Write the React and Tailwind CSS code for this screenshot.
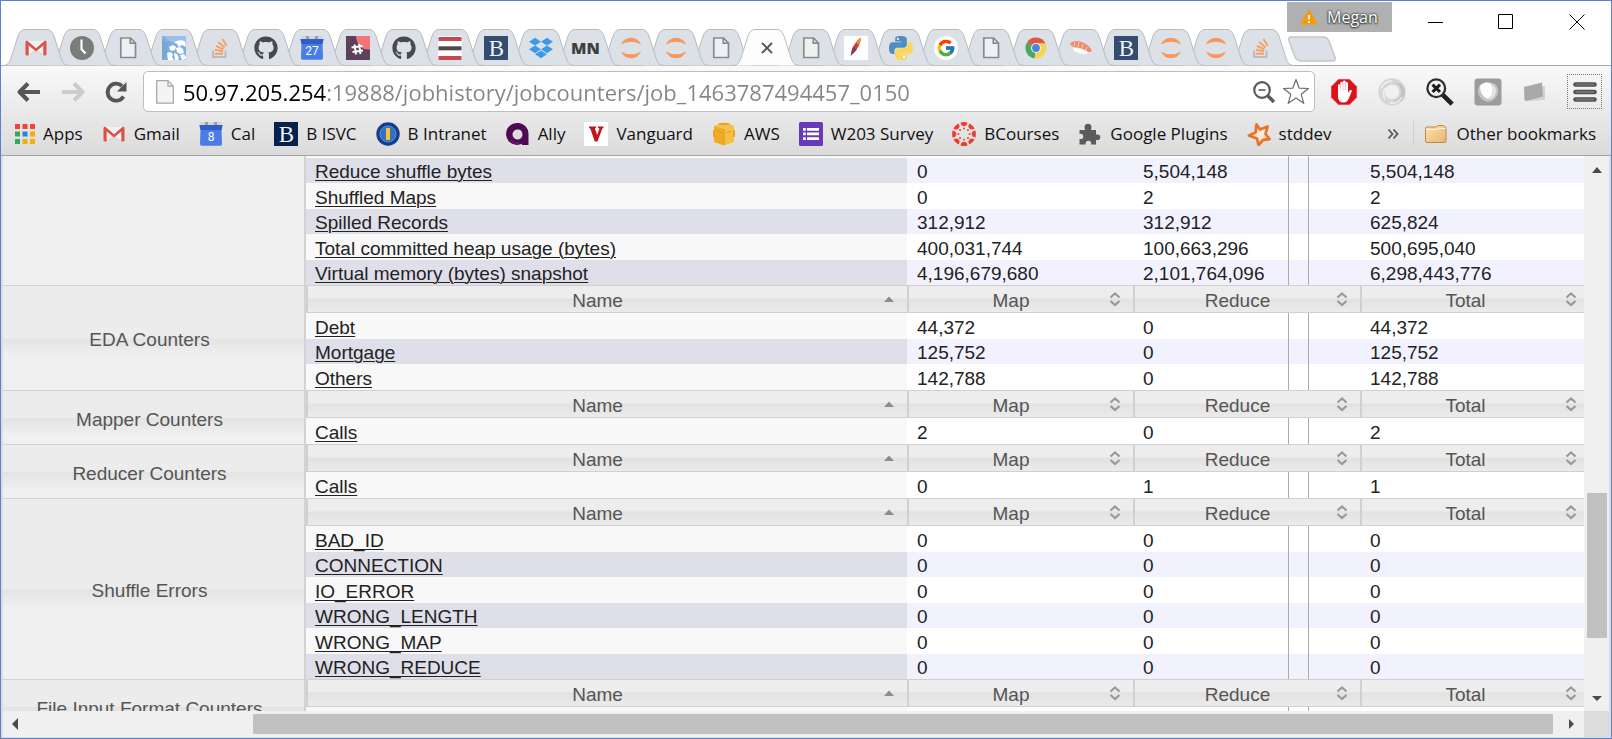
import React from "react";
import { FaGithub, FaDropbox } from "react-icons/fa";
import { FcGoogle } from "react-icons/fc";

/* ---------- favicons ---------- */

const Gmail = () => (
  <svg viewBox="0 0 24 24" className="size-6">
    <path d="M2 5h20v14.500H2z" fill="#f1f1f1" />
    <path d="M4 19.500l8-7 8 7z" fill="#dcdcdc" />
    <path d="M1.500 6.200Q1.500 4.500 3.300 4.500L12 12l8.700-7.500q1.800 0 1.800 1.700V18q0 1.500-1.500 1.500h-1.700V9.500L12 15.500 4.700 9.500v10H3q-1.500 0-1.500-1.500z" fill="#dd5347" />
    <path d="M3.300 4.500h2.200L12 9.800l6.500-5.300h2.200L12 12z" fill="#f7f7f7" />
  </svg>
);

const Clock = () => (
  <svg viewBox="0 0 24 24" className="size-6">
    <circle cx="12" cy="12" r="12" fill="#7b7b7b" />
    <path d="M11.500 3.500v9.500l4 4.500" fill="none" stroke="#fff" strokeWidth="2.200" />
  </svg>
);

const Doc = () => (
  <svg viewBox="0 0 24 24" className="size-6">
    <path d="M4.800 2h9.700l5 5v14.500H4.800z" fill="#eef0f2" stroke="#8a8a8a" strokeWidth="1.700" />
    <path d="M14.300 2v5.200h5.200" fill="none" stroke="#8a8a8a" strokeWidth="1.700" />
  </svg>
);

const Bird = () => (
  <svg viewBox="0 0 24 24" className="size-6">
    <path d="M0 0h24v24H0z" fill="#84aede" />
    <path d="M0 4q7 3 10 1-6 4-4 12-2 5-6 7z" fill="#79a4d6" />
    <path d="M2 0h22v5q-6-1-11 1Q6 6 2 0z" fill="#9bbfe7" />
    <path d="M12 6q6-3 11-1l1 6-4-2-3 2-2-3zM7 11l4-2 3 2-1 3-4 1zM5 17l3-1 3 2-1 3 2 3H6zM14 12l4-1 3 2 1 4-4 1-3-2zM12 17l3 1 2 4-1 2h-3zM18 19l4-1 2 3v2l-4 1z" fill="#fff" />
  </svg>
);

const Calendar = ({ day }) => (
  <svg viewBox="0 0 24 24" className="size-6">
    <path d="M1.500 0h21v6h-21z" fill="#d5d5d5" />
    <path d="M6 0h3v4H6zM15 0h3v4h-3z" fill="#9d9d9d" />
    <path d="M.5 3h23l-1 5 .5 14q0 1.800-1.800 1.800H2.800Q1 23.800 1 22l.5-14z" fill="#4a7be8" />
    <path d="M.5 3h23l-1 5h-21z" fill="#2f5dcb" />
    <text x="12" y="18.500" textAnchor="middle" fontSize="12" fontFamily="Roboto, sans-serif" fill="#fff">{day}</text>
  </svg>
);

const Hash = () => (
  <svg viewBox="0 0 24 24" className="size-6">
    <path d="M0 0h24v24H0z" fill="#5c4258" />
    <path d="M10 0h14v13.500Q11 14 10 0z" fill="#f4747c" />
    <path d="M8.500 8.500l1.500 10M13 8l1.500 10M5.500 11.500l11-1.500M6.500 16l10.500-1.500" stroke="#fff" strokeWidth="2" />
  </svg>
);

const Bars = () => (
  <svg viewBox="0 0 24 24" className="size-6">
    <path d="M0 0h24v24H0z" fill="#fff" />
    <path d="M.5 1h23v4H.5zM.5 20h23v4H.5z" fill="#c8464f" />
    <path d="M.5 10.300h23v4H.5z" fill="#4a4a4c" />
  </svg>
);

const Berkeley = ({ dark }) => (
  <svg viewBox="0 0 24 24" className="size-6">
    <path d="M0 0h24v24H0z" fill={dark ? "#06224c" : "#344c72"} />
    <text x="12.500" y="20" textAnchor="middle" fontSize="23" fontFamily="'Liberation Serif', serif" fill="#f3f3f3">B</text>
  </svg>
);

const Mn = () => <span className="font-['Open_Sans',sans-serif] text-[16px] leading-6 font-extrabold text-[#3f3f3f]">MN</span>;

const Jupyter = () => (
  <svg viewBox="0 0 24 24" className="size-6">
    <path d="M2 8.500Q5 1.800 12 1.800T22 8.500Q18 5.800 12 5.800T2 8.500zM2 15.500Q5 22.200 12 22.200T22 15.500Q18 18.200 12 18.200T2 15.500z" fill="#f8975a" />
  </svg>
);

const Feather = () => (
  <svg viewBox="0 0 24 24" className="size-6">
    <path d="M0 0h24v24H0z" fill="#fff" />
    <path d="M7 19Q7 10 16.500 1.500Q17.500 9 9 18z" fill="#c7423f" />
    <path d="M12 6.500Q14 3 16.500 1.500Q17.300 5 15 9z" fill="#f08b32" />
    <path d="M7.500 17q0-4 2-7l3 4q-2 3-5 3z" fill="#8d3a70" />
    <path d="M7 19.500L11 11" stroke="#7a3a5a" />
  </svg>
);

const Python = () => (
  <svg viewBox="0 0 24 24" className="size-6">
    <path d="M14.250.180l.9.200.730.260.590.300.450.320.340.340.250.340.160.330.100.300.040.260.020.200-.010.130V8.500l-.050.630-.130.550-.210.460-.260.380-.300.310-.330.250-.350.190-.350.140-.330.100-.300.070-.260.040-.210.020H8.770l-.690.050-.590.140-.500.220-.410.270-.330.320-.270.350-.200.360-.150.370-.100.350-.070.320-.040.270-.020.210v3.060H3.170l-.210-.030-.280-.070-.320-.120-.350-.180-.360-.260-.360-.360-.350-.460-.320-.590-.280-.730-.210-.880-.140-1.050-.050-1.230.060-1.220.160-1.040.240-.870.320-.710.360-.570.400-.440.420-.330.420-.240.400-.160.360-.100.320-.050.240-.010h8.380v-.830H6.180l-.010-2.750-.020-.370.050-.340.110-.310.170-.280.250-.260.310-.230.380-.200.440-.180.510-.150.580-.120.640-.100.710-.060.770-.040.840-.020 1.270.050z" fill="#4f8fbf" />
    <circle cx="8.900" cy="2.900" r="1.100" fill="#e4edf5" />
    <path d="M21.040 6.110l.280.060.320.120.350.180.360.270.360.350.350.470.320.590.280.730.210.880.140 1.040.050 1.230-.060 1.230-.160 1.040-.240.860-.320.710-.360.570-.400.450-.420.330-.420.240-.400.160-.360.090-.320.050-.240.020-.160-.010h-8.220v.820h5.840l.010 2.760.020.360-.050.340-.110.310-.170.290-.250.250-.310.240-.380.200-.440.170-.510.150-.580.130-.640.090-.710.070-.770.040-.840.010-1.270-.040-1.070-.140-.900-.200-.730-.250-.590-.300-.450-.330-.340-.340-.250-.340-.160-.330-.100-.300-.040-.250-.020-.200.010-.130v-5.340l.050-.640.130-.540.210-.460.260-.380.300-.320.330-.240.350-.200.350-.140.330-.100.300-.060.260-.040.210-.020.130-.010h5.840l.690-.050.590-.140.500-.210.410-.280.330-.320.270-.350.200-.360.150-.360.100-.350.070-.320.040-.280.020-.210V6.070h2.090z" fill="#fbd75b" />
    <circle cx="14.900" cy="21.100" r="1.100" fill="#fff" />
  </svg>
);

const Google = () => (
  <span className="grid size-6 place-items-center rounded-full bg-white">
    <FcGoogle className="size-5" />
  </span>
);

const Chrome = () => (
  <svg viewBox="0 0 24 24" className="size-6">
    <path d="M12 12L3 6.500A10.500 10.500 0 0 1 21.800 8.500z" fill="#e0574a" />
    <path d="M12 12l9.800-3.500A10.500 10.500 0 0 1 10.500 22.400z" fill="#fcd350" />
    <path d="M12 12l-1.500 10.400A10.500 10.500 0 0 1 3 6.500z" fill="#4ba765" />
    <path d="M12 7.200h9.100q.9 2 .9 4.800H16z" fill="#fcd350" />
    <circle cx="12" cy="12" r="5" fill="#f2f2f2" />
    <circle cx="12" cy="12" r="3.900" fill="#4a86d8" />
  </svg>
);

const Sushi = () => (
  <svg viewBox="0 0 24 24" className="size-6">
    <path d="M4 12q8 0 15 4 1 2-3 2-8 0-12-4z" fill="#fafafa" />
    <path d="M.8 8Q4 4 11 5.500q8 2 12 9-1 2-4 1.500Q15 12 8 11.500q-5-.500-7.200-3.500z" fill="#f2896a" />
    <path d="M6 6l-1 4M10 6l-1 5M14 8l-1 4M18 11l-1 3" stroke="#fbd0bf" />
  </svg>
);

const Ally = () => (
  <svg viewBox="0 0 24 24" className="size-6">
    <path d="M12 1a11 11 0 1 0 4 20.800V23h6.500V12A10.800 10.800 0 0 0 12 1z" fill="#4f0a54" />
    <path d="M11.800 7.500a5 5 0 1 0 4.700 5.200Q16.200 7.600 11.800 7.500z" fill="#ddd" />
    <path d="M5 18.500q3 3.500 8 2.500" fill="none" stroke="#7d2a82" />
  </svg>
);

const Intranet = () => (
  <svg viewBox="0 0 24 24" className="size-6">
    <circle cx="12" cy="12" r="11.700" fill="#123f93" />
    <circle cx="12" cy="12" r="8" fill="#3471bd" stroke="#5d90d0" />
    <path d="M10 6h4v12h-4z" fill="#f7c13c" />
  </svg>
);

const Vanguard = () => (
  <svg viewBox="0 0 24 24" className="size-6">
    <path d="M0 0h24v24H0z" fill="#fff" />
    <path d="M5 4.500h7v1.500l-1.200.500L13.200 13l2.300-6.500-1.500-.500V4.500h5.500V6l-1.200.500L13.500 19.500h-2.700L6.200 6.500 5 6z" fill="#c5141b" />
  </svg>
);

const Aws = () => (
  <svg viewBox="0 0 24 24" className="size-6">
    <path d="M2 4l10 2v17.500L2 20z" fill="#efac27" />
    <path d="M22 4L12 6v17.500L22 20z" fill="#f9be45" />
    <path d="M2 4l5-2.500 5-1 5 1L22 4l-10 3z" fill="#f6c153" />
    <path d="M1 8h2v7H1zM21 8h2v7h-2zM7 1h10v2H7z" fill="#e8a523" />
    <path d="M12 7v16M5 9.500l5 1M14 10.500l5-1" stroke="#d4941a" strokeWidth=".8" />
  </svg>
);

const FormIcon = () => (
  <svg viewBox="0 0 24 24" className="size-6">
    <path d="M1.500 0h21Q24 0 24 1.500v21q0 1.500-1.500 1.500h-21Q0 24 0 22.500v-21Q0 0 1.500 0z" fill="#673ab7" />
    <path d="M4 6h2.800v2.700H4zM8 6h12v2.700H8zM4 10.600h2.800v2.700H4zM8 10.600h12v2.700H8zM4 15.200h2.800v2.700H4zM8 15.200h12v2.700H8z" fill="#fff" />
  </svg>
);

const Canvas = () => (
  <svg viewBox="0 0 24 24" className="size-6">
    {[0, 45, 90, 135, 180, 225, 270, 315].map((a) => (
      <g key={a} transform={`rotate(${a} 12 12)`}>
        <path d="M8.500 .6q3.500-1 7 0Q15 4.200 12 4.300T8.500 .6z" fill="#e83f31" />
        <circle cx="12" cy="6.400" r=".95" fill="#e83f31" />
      </g>
    ))}
  </svg>
);

const Puzzle = () => (
  <svg viewBox="0 0 24 24" className="size-6">
    <path d="M1.500 8h5.700Q6.500 6.800 6.500 5.200a3.500 3.500 0 0 1 7 0q0 1.600-.7 2.800H18v4.500h1.500a2.800 2.800 0 0 1 0 5.600H18v4.400h-4.800v-1a2.800 2.800 0 0 0-5.600 0v1H1.500v-5.400h1a2.700 2.700 0 0 0 0-5.400h-1z" fill="#5c5c5c" />
  </svg>
);

const StatStar = () => (
  <svg viewBox="0 0 24 24" className="size-6">
    <path d="M9.500 2.500l3.500 5 7.500-3-2 7.500 4 5-6.500 1-4.500 5-1.500-6.500L2 13.500l6.500-3z" fill="#fbe9dc" stroke="#e8742c" strokeWidth="2.800" strokeLinejoin="round" />
  </svg>
);

const AppsGrid = () => (
  <svg viewBox="0 0 20 24" className="h-6 w-5">
    <path d="M0 2h5v5H0z M7.500 2h5v5h-5zM15 2h5v5h-5z" fill="#f04438" />
    <path d="M0 9.500h5v5H0zM0 17h5v5H0z" fill="#37a75b" />
    <path d="M7.500 9.500h5v5h-5z" fill="#1a86f0" />
    <path d="M15 9.500h5v5h-5zM7.500 17h5v5h-5zM15 17h5v5h-5z" fill="#f7ac0c" />
  </svg>
);

const Folder = () => (
  <svg viewBox="0 0 24 24" className="size-6">
    <defs>
      <linearGradient id="folder" x1="0" y1="0" x2="1" y2="1">
        <stop offset="0" stopColor="#fde3ae" />
        <stop offset="1" stopColor="#eab56c" />
      </linearGradient>
    </defs>
    <path d="M1.500 6.500q0-1.500 1.500-1.500h9l1.500-1.500h6L21 5q1 0 1 1.500V19q0 1.500-1.500 1.500h-17.500Q1.500 20.500 1.500 19z" fill="url(#folder)" stroke="#b58a4c" />
    <path d="M2 7.500h11l2-1h6.500" fill="none" stroke="#fff3d6" />
  </svg>
);

const StackIcon = () => (
  <svg viewBox="0 0 24 24" className="size-6">
    <path d="M5 14.500v6.500h12.500v-6.500" fill="none" stroke="#b9bcc0" strokeWidth="2" />
    <path d="M6.700 17.800h8.300M6.800 13.800l8.300 1.600M7.800 9.900l7.700 3.500M10.100 6l6.500 5.400M14.500 3l4.200 7" fill="none" stroke="#f6a063" strokeWidth="1.900" />
  </svg>
);

const Github = () => <FaGithub className="size-6 text-[#464a4d]" />;
const Dropbox = () => <FaDropbox className="size-6 text-[#3d9ae8]" />;

/* ---------- tab strip ---------- */

const tabs = [
  ["Gmail", <Gmail />],
  ["History", <Clock />],
  ["Document", <Doc />],
  ["Bird", <Bird />],
  ["Stack Overflow", <StackIcon />],
  ["GitHub", <Github />],
  ["Calendar", <Calendar day="27" />],
  ["Slack", <Hash />],
  ["GitHub", <Github />],
  ["Reports", <Bars />],
  ["Berkeley", <Berkeley />],
  ["Dropbox", <Dropbox />],
  ["MN", <Mn />],
  ["Jupyter", <Jupyter />],
  ["Jupyter", <Jupyter />],
  ["Document", <Doc />],
  ["Close tab", null],
  ["Document", <Doc />],
  ["Apache", <Feather />],
  ["Python", <Python />],
  ["Google", <Google />],
  ["Document", <Doc />],
  ["Chrome", <Chrome />],
  ["Sushi", <Sushi />],
  ["Berkeley", <Berkeley />],
  ["Jupyter", <Jupyter />],
  ["Jupyter", <Jupyter />],
  ["Stack Overflow", <StackIcon />],
];

function Tab({ label, icon, index }) {
  const active = icon === null;
  return (
    <button
      aria-label={label}
      className={`relative flex h-[37px] shrink-0 items-center justify-center ${index < 10 ? "w-[46px]" : "w-[45px]"}`}
      style={{ zIndex: active ? 40 : 30 - index }}
    >
      <svg viewBox="0 0 66 37" className="absolute -left-[10px] top-0 h-[37px] w-[66px]">
        <path
          d="M0 36.500C5 36 6 34 8 29L15 7Q17.500 .5 22 .5H44Q48.500 .5 51 7L58 29C60 34 61 36 66 36.500z"
          fill={active ? "#fdfdfd" : "#dce0e7"}
        />
        <path
          d="M0 36.500C5 36 6 34 8 29L15 7Q17.500 .5 22 .5H44Q48.500 .5 51 7L58 29C60 34 61 36 66 36.500"
          fill="none"
          stroke="#b9bbbe"
        />
      </svg>
      <span className="relative flex h-6 items-center justify-center">
        {active ? (
          <svg viewBox="0 0 24 24" className="size-6">
            <path d="M8 7l10 10M18 7L8 17" stroke="#555" strokeWidth="1.800" />
          </svg>
        ) : (
          icon
        )}
      </span>
    </button>
  );
}

function TitleBar() {
  return (
    <header className="relative z-10 grid h-[65px] bg-white">
      <div className="col-start-1 row-start-1 flex items-end self-end border-b border-[#a9a9a9] pl-3">
        <div className="-mb-px flex">
          {tabs.map(([label, icon], i) => (
            <Tab key={i} label={label} icon={icon} index={i} />
          ))}
        </div>
        <button aria-label="New tab" className="mb-[3px] ml-1">
          <svg viewBox="0 0 50 26" className="h-[26px] w-[50px]">
            <path d="M4 1h32q4 0 6 4l6 16q1 4-3 4H14q-4 0-6-4L2 5Q1 1 4 1z" fill="#dce0e7" stroke="#c3c5c8" strokeWidth="1.500" />
          </svg>
        </button>
      </div>
      <div className="col-start-1 row-start-1 mt-px flex self-start justify-self-end pr-[14px]">
        <button className="mr-6 flex h-[30px] w-[105px] items-center gap-2 bg-[#b0b0b0] pl-3 font-['Open_Sans',sans-serif] text-[16px] text-white [text-shadow:0_0_2px_#333,0_0_2px_#333,0_1px_2px_#333]">
          <svg viewBox="0 0 20 20" className="size-5">
            <path d="M10 2L19 17.500H1z" fill="#f59a0c" />
            <path d="M10 8v4.500M10 14v2" stroke="#fff" strokeWidth="1.800" />
          </svg>
          Megan
        </button>
        <button aria-label="Minimize" className="flex h-10 w-[70px] items-center px-3">
          <svg viewBox="0 0 16 16" className="size-4"><path d="M0 8.500h15" stroke="#000" /></svg>
        </button>
        <button aria-label="Maximize" className="flex h-10 w-[71px] items-center px-3">
          <svg viewBox="0 0 16 16" className="size-4"><path d="M.5 .5h14v14H.5z" fill="none" stroke="#000" /></svg>
        </button>
        <button aria-label="Close" className="flex h-10 items-center px-3">
          <svg viewBox="0 0 16 16" className="size-4"><path d="M.5 .5l15 15M15.500 .5l-15 15" stroke="#000" /></svg>
        </button>
      </div>
    </header>
  );
}

/* ---------- toolbar ---------- */

function Toolbar() {
  return (
    <div className="flex h-[43px] items-center pr-[9px] pl-[15px]">
      <button aria-label="Back" className="mr-[18px]">
        <svg viewBox="0 0 26 24" className="h-6 w-[26px]">
          <path d="M24 12H5M12 3.500L3.500 12l8.500 8.500" fill="none" stroke="#565656" strokeWidth="4" strokeLinejoin="round" />
        </svg>
      </button>
      <button aria-label="Forward" className="mr-[18px]">
        <svg viewBox="0 0 26 24" className="h-6 w-[26px]">
          <path d="M2 12h19M14 3.500l8.500 8.500-8.500 8.500" fill="none" stroke="#cbcbcb" strokeWidth="4" strokeLinejoin="round" />
        </svg>
      </button>
      <button aria-label="Reload" className="mr-[15px]">
        <svg viewBox="0 0 24 24" className="size-6">
          <path d="M19.500 16.500A8.500 8.500 0 1 1 18 6" fill="none" stroke="#565656" strokeWidth="3.800" />
          <path d="M22.500 2v9.500H13z" fill="#565656" />
        </svg>
      </button>
      <div className="flex h-[41px] flex-1 items-center rounded-[5px] border border-[#bdbdbd] bg-white pl-3 pr-1">
        <svg viewBox="0 0 18 24" className="mr-[9px] h-6 w-[18px]">
          <path d="M.7 .7H12l5.300 5.500v17H.7z" fill="#f4f4f4" stroke="#a5a5a5" strokeWidth="1.200" />
          <path d="M12 .7v5.500h5.300" fill="none" stroke="#a5a5a5" strokeWidth="1.200" />
        </svg>
        <input
          aria-label="Address"
          defaultValue="50.97.205.254:19888/jobhistory/jobcounters/job_1463787494457_0150"
          className="h-9 min-w-0 flex-1 bg-[linear-gradient(90deg,#000_144px,#858585_144px)] bg-clip-text font-['Open_Sans',sans-serif] text-[22px] text-transparent outline-none"
        />
        <button aria-label="Zoom" className="mr-[6px]">
          <svg viewBox="0 0 24 24" className="size-6">
            <circle cx="10" cy="10" r="7.800" fill="none" stroke="#5a5a5a" strokeWidth="2.200" />
            <path d="M6.500 10h7" stroke="#5a5a5a" strokeWidth="1.600" />
            <path d="M15.500 15.500L22 22" stroke="#5a5a5a" strokeWidth="3.400" />
          </svg>
        </button>
        <button aria-label="Bookmark this page">
          <svg viewBox="0 0 28 28" className="size-7">
            <path d="M14 1.500l3.200 8.700 9.300.3-7.300 5.800 2.600 9L14 20.100l-7.800 5.200 2.600-9-7.300-5.800 9.300-.3z" fill="#fff" stroke="#6b6b6b" strokeWidth="1.200" strokeLinejoin="round" />
          </svg>
        </button>
      </div>
      <div className="flex items-center gap-5 pl-[15px]">
        <button aria-label="Ad blocker">
          <svg viewBox="0 0 28 28" className="size-7">
            <path d="M8.500 .8h11l7.700 7.700v11l-7.700 7.700h-11L.8 19.500v-11z" fill="#d9141c" stroke="#fff" strokeWidth=".8" />
            <path d="M8 13V7.500a1.200 1.200 0 0 1 2.400 0V12V5a1.300 1.300 0 0 1 2.600 0v7V3.800a1.300 1.300 0 0 1 2.600 0V12V5.200a1.200 1.200 0 0 1 2.400 0V15l1.500-2.500q1.800-1 2.500.3L18.500 21q-1.500 3.500-5 3.500Q8 24.500 8 18.500z" fill="#fff" />
            <path d="M10.400 7v5.500M13 5v7.500M15.600 5v7.500" stroke="#e88" strokeWidth=".5" />
          </svg>
        </button>
        <button aria-label="Sync">
          <svg viewBox="0 0 28 28" className="size-7">
            <circle cx="14" cy="14" r="10.500" fill="none" stroke="#d6d6d6" strokeWidth="6.500" />
            <path d="M15 4q8 2 8 10t-8 9q12 3 12-9Q26 4 15 4z" fill="#c2c2c2" />
            <path d="M3 11q3-8 11-8M7 22Q4 16 7 10M12 25q8 1 12-6" fill="none" stroke="#f0f0f0" strokeWidth="1.500" />
          </svg>
        </button>
        <button aria-label="Clear search">
          <svg viewBox="0 0 30 30" className="size-7">
            <circle cx="11" cy="11" r="9.500" fill="#f3f3f3" stroke="#2c2c2c" strokeWidth="2.400" />
            <path d="M7 7l8 8M15 7l-8 8" stroke="#1d1d1d" strokeWidth="3.400" />
            <path d="M18 18l10 10" stroke="#222" strokeWidth="5" />
          </svg>
        </button>
        <button aria-label="Shield">
          <svg viewBox="0 0 28 28" className="size-7">
            <rect x=".5" y=".5" width="27" height="27" rx="3" fill="#9c9c9c" />
            <path d="M4 14Q3 5 14 4q11 1 10 10-1 8-10 10Q5 22 4 14z" fill="#c4c4c4" />
            <path d="M6 8q6-6 11-2 5 8-3 15-8-3-8-13z" fill="#fff" />
            <path d="M18 6q6 4 3 11-3 5-6 4 5-8 3-15z" fill="#e4e4e4" />
          </svg>
        </button>
        <button aria-label="Cards">
          <svg viewBox="0 0 28 28" className="size-7">
            <path d="M5 9l18-1v14L7 23z" fill="#d2d2d2" />
            <path d="M2 9l18-4.500 1 14L4 23q-1.500 0-1.500-1.500z" fill="#a8a8a8" />
          </svg>
        </button>
        <button aria-label="Menu" className="-ml-[3px] grid h-[35px] w-[35px] place-items-center border border-dotted border-[#777]">
          <svg viewBox="0 0 24 22" className="h-[22px] w-6">
            <path d="M2.500 3.500h19M2.500 11h19M2.500 18.500h19" stroke="#4f4f4f" strokeWidth="4.600" strokeLinecap="round" />
            <path d="M2.500 3.500h19M2.500 11h19M2.500 18.500h19" stroke="#727272" strokeWidth="2" />
          </svg>
        </button>
      </div>
    </div>
  );
}

const bookmarks = [
  ["Apps", <AppsGrid />],
  ["Gmail", <Gmail />],
  ["Cal", <Calendar day="8" />],
  ["B ISVC", <Berkeley dark />],
  ["B Intranet", <Intranet />],
  ["Ally", <Ally />],
  ["Vanguard", <Vanguard />],
  ["AWS", <Aws />],
  ["W203 Survey", <FormIcon />],
  ["BCourses", <Canvas />],
  ["Google Plugins", <Puzzle />],
  ["stddev", <StatStar />],
];

function BookmarksBar() {
  return (
    <nav className="flex h-[41px] items-center pr-[15px] pl-[14px] font-['Open_Sans',sans-serif] text-[17px] whitespace-nowrap text-[#111]">
      <div className="flex flex-1 gap-[19px]">
        {bookmarks.map(([label, icon]) => (
          <a key={label} href="#" className="flex items-center gap-2">
            {icon}
            {label}
          </a>
        ))}
      </div>
      <button aria-label="More bookmarks" className="pr-[14px]">
        <svg viewBox="0 0 12 12" className="size-3">
          <path d="M1.500 1.500L5.500 6l-4 4.500M6.500 1.500l4 4.500-4 4.500" fill="none" stroke="#555" strokeWidth="1.800" />
        </svg>
      </button>
      <a href="#" className="flex items-center gap-2 border-l border-[#c4d0dc] pl-[10px]">
        <Folder />
        Other bookmarks
      </a>
    </nav>
  );
}

/* ---------- counters table ---------- */

const groups = [
  {
    name: "",
    head: false,
    rows: [
      ["Reduce shuffle bytes", "0", "5,504,148", "5,504,148"],
      ["Shuffled Maps", "0", "2", "2"],
      ["Spilled Records", "312,912", "312,912", "625,824"],
      ["Total committed heap usage (bytes)", "400,031,744", "100,663,296", "500,695,040"],
      ["Virtual memory (bytes) snapshot", "4,196,679,680", "2,101,764,096", "6,298,443,776"],
    ],
  },
  {
    name: "EDA Counters",
    head: true,
    rows: [
      ["Debt", "44,372", "0", "44,372"],
      ["Mortgage", "125,752", "0", "125,752"],
      ["Others", "142,788", "0", "142,788"],
    ],
  },
  { name: "Mapper Counters", head: true, rows: [["Calls", "2", "0", "2"]] },
  { name: "Reducer Counters", head: true, rows: [["Calls", "0", "1", "1"]] },
  {
    name: "Shuffle Errors",
    head: true,
    rows: [
      ["BAD_ID", "0", "0", "0"],
      ["CONNECTION", "0", "0", "0"],
      ["IO_ERROR", "0", "0", "0"],
      ["WRONG_LENGTH", "0", "0", "0"],
      ["WRONG_MAP", "0", "0", "0"],
      ["WRONG_REDUCE", "0", "0", "0"],
    ],
  },
  { name: "File Input Format Counters", head: true, rows: [["", "", "", ""]] },
];

function GroupCell({ group }) {
  return (
    <th
      rowSpan={group.rows.length + 1}
      scope="rowgroup"
      className={`border-r-2 border-[#d3d3d3] p-0 pt-1 pr-2 text-center align-middle font-normal text-[#555] ${
        group.head
          ? "border-t bg-[linear-gradient(#ececec_50%,#e3e3e3_calc(50%+1px),#f0f0f0_calc(50%+18px))]"
          : "bg-[#f0f0f0]"
      }`}
    >
      {group.name}
    </th>
  );
}

function HeadCell({ label, sorted }) {
  return (
    <th
      scope="col"
      className="h-7 border-t border-b border-l-2 border-[#d0d0d0] bg-[linear-gradient(#ededed_45%,#e2e2e2_50%,#ebebeb)] p-0 font-normal text-[#555]"
    >
      <button className="flex h-[26px] w-full items-center pt-[3px] pr-3 leading-[22px]">
        <span className="flex-1 pl-1 text-center">{label}</span>
        {sorted ? (
          <svg viewBox="0 0 12 16" className="-mt-1 h-4 w-3">
            <path d="M6 5.500l5 5.500H1z" fill="#8c8c8c" />
          </svg>
        ) : (
          <svg viewBox="0 0 12 16" className="-mt-1 h-4 w-3">
            <path d="M1.500 6.500L6 2.500l4.500 4M1.500 10L6 14l4.500-4" fill="none" stroke="#999" strokeWidth="2.200" />
          </svg>
        )}
      </button>
    </th>
  );
}

function SpacerCells() {
  return (
    <>
      <td className="h-[2px] bg-[#f8f8f8] p-0" />
      <td className="bg-white p-0" />
      <td className="bg-white p-0">
        <div className="mr-[51px] ml-auto h-[2px] w-[21px] border-x border-[#a9a9b0]" />
      </td>
      <td className="bg-white p-0" />
    </>
  );
}

function DataCells({ row, dark }) {
  const height = dark ? "h-[25px]" : "h-[26px]";
  const value = `p-0 pl-[10px] ${dark ? "bg-[#f2f2ff]" : "bg-white"}`;
  const text = `flex items-center pt-[3px] leading-[22px] ${height}`;
  return (
    <>
      <td className={`p-0 pl-[9px] ${dark ? "bg-[#dfdfea]" : "bg-[#f8f8f8]"}`}>
        <div className={text}>
          <a href="#" className="underline decoration-1 underline-offset-2">{row[0]}</a>
        </div>
      </td>
      <td className={value}><div className={text}>{row[1]}</div></td>
      <td className={value}>
        <div className="flex">
          <span className={`flex-1 ${text}`}>{row[2]}</span>
          <span className={`mr-[51px] w-[21px] border-x border-[#a9a9b0] ${height}`} />
        </div>
      </td>
      <td className={value}><div className={text}>{row[3]}</div></td>
    </>
  );
}

function CountersTable() {
  return (
    <table className="w-[calc(100%+5px)] table-fixed border-separate border-spacing-0 text-[19px] leading-[22px] text-[#222]">
      <colgroup>
        <col className="w-[303px]" />
        <col />
        <col className="w-[226px]" />
        <col className="w-[227px]" />
        <col className="w-[229px]" />
      </colgroup>
      {groups.map((group, g) => (
        <tbody key={g}>
          <tr>
            <GroupCell group={group} />
            {group.head ? (
              <>
                <HeadCell label="Name" sorted />
                <HeadCell label="Map" />
                <HeadCell label="Reduce" />
                <HeadCell label="Total" />
              </>
            ) : (
              <SpacerCells />
            )}
          </tr>
          {group.rows.map((row, i) => (
            <tr key={i}>
              <DataCells row={row} dark={i % 2 === (group.head ? 1 : 0)} />
            </tr>
          ))}
        </tbody>
      ))}
    </table>
  );
}

/* ---------- scroll bars ---------- */

const Arrow = ({ d }) => (
  <svg viewBox="0 0 12 12" className="size-3"><path d={d} fill="#4a4a4a" /></svg>
);

function VerticalBar() {
  return (
    <div className="flex w-[25px] shrink-0 flex-col bg-[#f0f0f0]">
      <button aria-label="Scroll up" className="grid h-[27px] place-items-center"><Arrow d="M6 3l5 6H1z" /></button>
      <div className="flex flex-1 flex-col items-center">
        <div className="grow-[310]" />
        <div className="w-5 grow-[145] bg-[#c1c1c1]" />
        <div className="grow-[46]" />
      </div>
      <button aria-label="Scroll down" className="grid h-[27px] place-items-center"><Arrow d="M1 4h10L6 9z" /></button>
    </div>
  );
}

function HorizontalBar() {
  return (
    <div className="flex h-[26px] shrink-0 bg-[#f0f0f0]">
      <button aria-label="Scroll left" className="grid w-6 place-items-center"><Arrow d="M9 0v12L3 6z" /></button>
      <div className="flex flex-1 items-center">
        <div className="grow-[226]" />
        <div className="h-5 grow-[1300] bg-[#c1c1c1]" />
        <div className="grow-[4]" />
      </div>
      <button aria-label="Scroll right" className="grid w-[27px] place-items-center"><Arrow d="M4 1v10l5-5z" /></button>
      <div className="w-[25px] bg-[#dcdcdc]" />
    </div>
  );
}

export default function App() {
  return (
    <div className="flex h-screen flex-col overflow-hidden border border-[#5b80cc] bg-white font-['Liberation_Sans',Arial,sans-serif]">
      <TitleBar />
      <div className="border-b border-[#a3a3a3] bg-linear-to-b from-[#f9f9f9] to-[#dbdbdb] pt-1 pb-px">
        <Toolbar />
        <BookmarksBar />
      </div>
      <div className="flex min-h-0 flex-1 flex-col border-x-2 border-b border-[#dcdcdc]">
        <div className="flex min-h-0 flex-1">
          <main className="min-w-0 flex-1 overflow-hidden">
            <CountersTable />
          </main>
          <VerticalBar />
        </div>
        <HorizontalBar />
      </div>
    </div>
  );
}
